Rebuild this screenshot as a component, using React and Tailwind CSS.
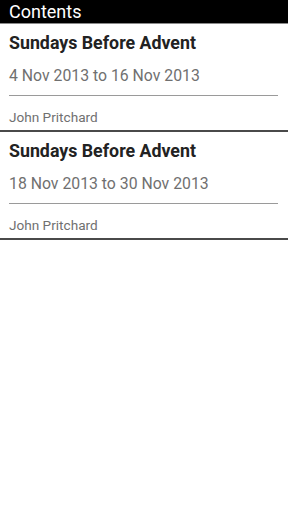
import React from 'react'

const items = [
  { title: 'Sundays Before Advent', dates: '4 Nov 2013 to 16 Nov 2013', author: 'John Pritchard' },
  { title: 'Sundays Before Advent', dates: '18 Nov 2013 to 30 Nov 2013', author: 'John Pritchard' },
]

const App = () => {
  return (
    <div className="w-[288px] h-[512px] bg-white overflow-hidden" style={{ fontFamily: 'Roboto, sans-serif' }}>
      {/* Action bar */}
      <div className="h-[23px] bg-black flex items-center pl-[9px] border-b border-[#8a8a8a] box-content">
        <span className="text-white text-[18px] leading-none">Contents</span>
      </div>

      {items.map((item, i) => (
        <div key={i} className="pl-[9px] pr-[10px] border-b-2 border-[#4a4a4a]">
          <div className="h-[37px] pt-px flex items-center text-[17.8px] font-bold text-[#222]">{item.title}</div>
          <div className="h-[29px] pt-px flex items-center text-[15.8px] text-[#707070]">{item.dates}</div>
          <div className="mt-[5px] h-px bg-[#9a9a9a]" />
          <div className="mt-[8px] h-[26px] pt-px flex items-center text-[13.6px] text-[#707070]">{item.author}</div>
        </div>
      ))}
    </div>
  )
}

export default App
